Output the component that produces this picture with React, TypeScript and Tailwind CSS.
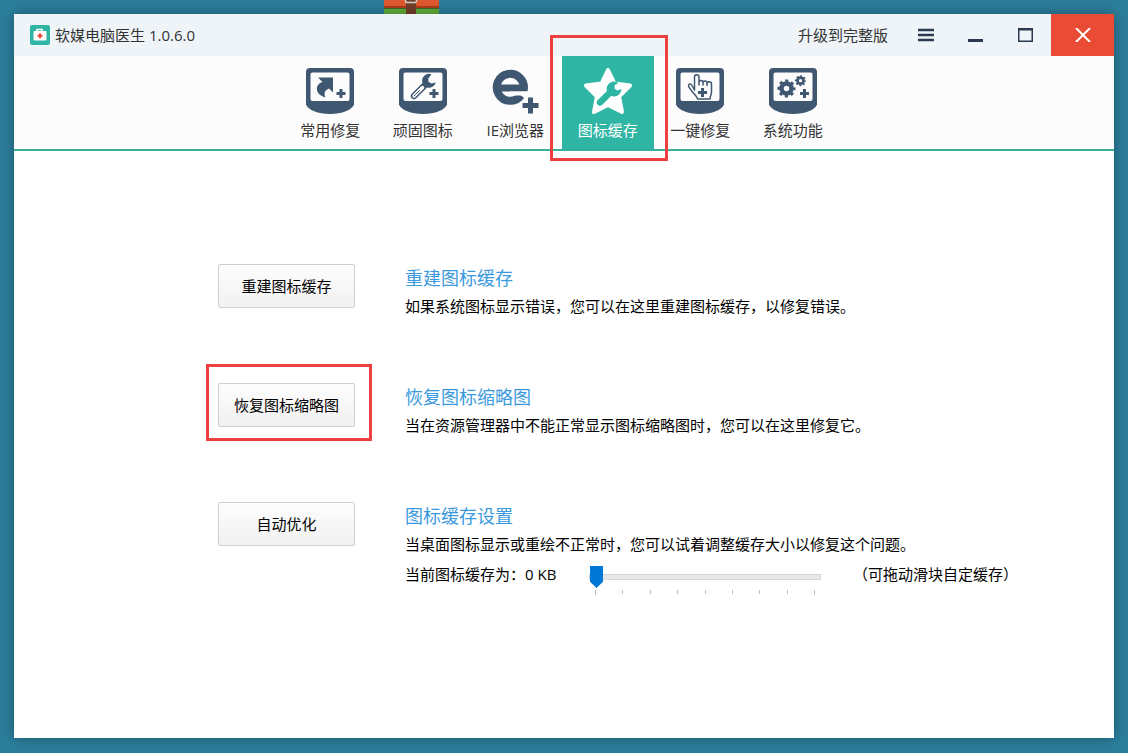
import { useState } from 'react';
import type { ReactNode } from 'react';

function Plus({ x, y, size = 9, weight = 3 }: { x: number; y: number; size?: number; weight?: number }) {
  const r = size / 2;
  return (
    <path
      d={`M${x - r} ${y}H${x + r}M${x} ${y - r}V${y + r}`}
      stroke="currentColor"
      strokeWidth={weight}
      fill="none"
    />
  );
}

function Monitor({ children }: { children: ReactNode }) {
  return (
    <svg width="48" height="46" viewBox="0 0 48 46" fill="none">
      <path
        d="M4 0h40a4 4 0 0 1 4 4v32.500C46 42 36 46 24 46S2 42 0 36.500V4a4 4 0 0 1 4-4z"
        fill="currentColor"
      />
      <rect x="4.500" y="4.500" width="39" height="28.500" rx="2" fill="#fcfcfc" />
      {children}
    </svg>
  );
}

function Gear({ x, y, r, weight }: { x: number; y: number; r: number; weight: number }) {
  const tooth = (2 * Math.PI * (r + weight / 2)) / 16;
  return (
    <g stroke="currentColor" fill="none">
      <circle cx={x} cy={y} r={r} strokeWidth={weight} />
      <circle
        cx={x}
        cy={y}
        r={r + weight / 2}
        strokeWidth={weight * 0.8}
        strokeDasharray={`${tooth} ${tooth}`}
        strokeDashoffset={tooth / 2}
      />
    </g>
  );
}

const ShortcutIcon = () => (
  <Monitor>
    <path
      d="M12 9.500H27V24.500L23 20.500C19 22 17.500 25 19.500 29.500C13.500 28 10 23.500 11 19C12 16 14.500 14.500 16.500 14Z"
      fill="currentColor"
    />
    <Plus x={35} y={25.5} />
  </Monitor>
);

const WrenchIcon = () => (
  <Monitor>
    <path
      d="M32.500 6.200A7 7 0 1 0 36.800 14.500L32.500 15.500L29.500 13.800L29.300 10.500Z"
      fill="currentColor"
    />
    <path d="M15 28L25 18" stroke="currentColor" strokeWidth="6.500" strokeLinecap="round" />
    <path d="M15 28L23.500 19.500" stroke="#fcfcfc" strokeWidth="3.500" strokeLinecap="round" />
    <path d="M15 28L20.500 22.500" stroke="currentColor" strokeWidth="1" strokeLinecap="round" />
    <Plus x={35} y={25.5} />
  </Monitor>
);

const BrowserIcon = () => (
  <svg width="48" height="46" viewBox="0 0 48 46" fill="none">
    <path
      d="M32.500 22A13.500 13.500 0 1 0 30 27.500"
      stroke="currentColor"
      strokeWidth="8"
    />
    <path d="M8 20H36.500" stroke="currentColor" strokeWidth="7" />
    <path d="M19 25.500H38" stroke="#fcfcfc" strokeWidth="4" />
    <Plus x={39.5} y={37.5} size={16} weight={5} />
  </svg>
);

const StarIcon = () => (
  <svg width="50" height="48" viewBox="0 0 50 48" fill="none">
    <path
      d="M25 3L31.500 16.500L47 18.500L36 29.500L39 45L25 38L11 45L14 29.500L3 18.500L18.500 16.500Z"
      fill="currentColor"
      stroke="currentColor"
      strokeWidth="4"
      strokeLinejoin="round"
    />
    <path
      d="M35.500 16A7.500 7.500 0 1 0 38.500 22L34.500 23.500L31.500 21.500L31.800 18Z"
      fill="#2fb5a3"
    />
    <path d="M17 35.500L28.500 24" stroke="#2fb5a3" strokeWidth="6.500" strokeLinecap="round" />
  </svg>
);

const HandIcon = () => (
  <Monitor>
    <path
      d="M18.500 22V9a2 2 0 0 1 4.500 0v8v-2.500a2 2 0 0 1 4 0V17v-2a2 2 0 0 1 4 0v2.500v-1.500a2 2 0 0 1 4.500 0V24c0 3-1.500 4-1.500 7H21.500c0-3-6.500-7-9-13c0-2.500 2.500-2.500 3.500-.500z"
      stroke="currentColor"
      strokeWidth="1.500"
      strokeLinejoin="round"
    />
    <Plus x={26.5} y={24.5} />
  </Monitor>
);

const GearsIcon = () => (
  <Monitor>
    <Gear x={17.5} y={20.5} r={5} weight={4.5} />
    <Gear x={31.5} y={12.7} r={3} weight={2.8} />
    <Plus x={35.5} y={25.5} />
  </Monitor>
);

const LogoIcon = () => (
  <svg width="20" height="20" viewBox="0 0 20 20" fill="none">
    <rect width="20" height="20" rx="2" fill="#2fb5a3" />
    <path d="M7 6V4.500h5V6" stroke="#fff" strokeWidth="1.500" />
    <rect x="3.500" y="6" width="13" height="9.500" rx="1" fill="#fff" />
    <path d="M7.500 10.800h5M10 8.300v5" stroke="#e84a34" strokeWidth="2" />
  </svg>
);

// bottom edge of the archive icon that sits on the desktop behind the window
const ArchiveIcon = () => (
  <svg width="56" height="14" viewBox="0 0 56 14" fill="none">
    <rect width="55" height="7" rx="1" fill="#e2592f" />
    <rect y="6" width="55" height="2" fill="#b23c1c" />
    <rect y="8" width="55" height="1" fill="#3c6b2c" />
    <rect y="9" width="55" height="5" fill="#62b23c" />
    <rect x="22" width="10" height="14" fill="#74402c" />
    <path d="M21.500 0v1a1.500 1.500 0 0 0 1.500 1.500h8a1.500 1.500 0 0 0 1.500-1.500V0" stroke="#d8d4cf" strokeWidth="1.500" />
  </svg>
);

const tabs = [
  { id: 'common', label: '常用修复', icon: <ShortcutIcon /> },
  { id: 'stubborn', label: '顽固图标', icon: <WrenchIcon /> },
  { id: 'ie', label: 'IE浏览器', icon: <BrowserIcon /> },
  { id: 'cache', label: '图标缓存', icon: <StarIcon />, marked: true },
  { id: 'oneclick', label: '一键修复', icon: <HandIcon /> },
  { id: 'system', label: '系统功能', icon: <GearsIcon /> },
];

const actions = [
  {
    button: '重建图标缓存',
    title: '重建图标缓存',
    text: '如果系统图标显示错误，您可以在这里重建图标缓存，以修复错误。',
  },
  {
    button: '恢复图标缩略图',
    title: '恢复图标缩略图',
    text: '当在资源管理器中不能正常显示图标缩略图时，您可以在这里修复它。',
    marked: true,
  },
  {
    button: '自动优化',
    title: '图标缓存设置',
    text: '当桌面图标显示或重绘不正常时，您可以试着调整缓存大小以修复这个问题。',
    slider: true,
  },
];

function TitleBar() {
  return (
    <header className="flex h-[42px] items-center bg-[#eff4f9] pl-4 text-[#333]">
      <LogoIcon />
      <h1 className="ml-[5px]">软媒电脑医生 1.0.6.0</h1>
      <a href="#upgrade" className="mr-[13px] ml-auto">
        升级到完整版
      </a>
      <div className="flex h-full text-[#2b3a50]">
        <button aria-label="菜单" className="flex w-[50px] items-center justify-center">
          <svg width="16" height="14" viewBox="0 0 16 14">
            <path d="M0 2h16M0 7h16M0 12h16" stroke="currentColor" strokeWidth="2.500" />
          </svg>
        </button>
        <button aria-label="最小化" className="flex w-[50px] items-center justify-center">
          <svg width="16" height="14" viewBox="0 0 16 14">
            <path d="M0 12.500h15" stroke="currentColor" strokeWidth="3" />
          </svg>
        </button>
        <button aria-label="最大化" className="flex w-[50px] items-center justify-center">
          <svg width="16" height="14" viewBox="0 0 16 14" fill="none">
            <path d="M.75 1v12.250h13.500V1" stroke="currentColor" strokeWidth="1.500" />
            <path d="M0 1.250h15" stroke="currentColor" strokeWidth="2.500" />
          </svg>
        </button>
        <button
          aria-label="关闭"
          className="flex w-[63px] items-center justify-center bg-[#e94b35] text-white"
        >
          <svg width="16" height="14" viewBox="0 0 16 14">
            <path d="M1 0l14 14M15 0L1 14" stroke="currentColor" strokeWidth="2" />
          </svg>
        </button>
      </div>
    </header>
  );
}

function CacheSlider() {
  const [size, setSize] = useState(0);

  return (
    <div className="flex h-[34px] items-start">
      <label htmlFor="cache-size" className="w-[184px] leading-8">
        当前图标缓存为：{size} KB
      </label>
      <div className="mt-2 w-[232px]">
        <input
          id="cache-size"
          type="range"
          min={0}
          max={8192}
          step={1024}
          value={size}
          onChange={(e) => setSize(Number(e.target.value))}
          className="block h-[22px] w-full appearance-none bg-transparent [&::-webkit-slider-runnable-track]:h-[6px] [&::-webkit-slider-runnable-track]:border [&::-webkit-slider-runnable-track]:border-[#d6d6d6] [&::-webkit-slider-runnable-track]:bg-[#e7e7e7] [&::-webkit-slider-thumb]:-mt-[9px] [&::-webkit-slider-thumb]:h-[22px] [&::-webkit-slider-thumb]:w-[13px] [&::-webkit-slider-thumb]:appearance-none [&::-webkit-slider-thumb]:bg-[#0078d7] [&::-webkit-slider-thumb]:[clip-path:polygon(0_0,100%_0,100%_72%,50%_100%,0_72%)]"
        />
        <div className="mt-0.5 flex justify-between px-[6px]">
          {Array.from({ length: 9 }, (_, i) => (
            <span key={i} className="h-1 w-px bg-[#bdbdbd] first:h-[5px] last:h-[5px]" />
          ))}
        </div>
      </div>
      <span className="ml-8 leading-8">（可拖动滑块自定缓存）</span>
    </div>
  );
}

export default function App() {
  const [active, setActive] = useState('cache');

  return (
    <div
      lang="zh-CN"
      className="relative flex min-h-screen bg-[#2c7f9c] px-[14px] pt-[14px] pb-[15px] font-['Open_Sans','Noto_Sans_CJK_SC',sans-serif] text-[15px]"
    >
      <div className="absolute top-0 left-[384px]">
        <ArchiveIcon />
      </div>

      <div className="relative flex flex-1 flex-col bg-white shadow-[0_0_14px_rgba(0,0,0,0.35)]">
        <TitleBar />

        <nav className="flex h-[95px] justify-center border-b-2 border-[#38b09d] bg-[#fcfcfc] pr-[5px]">
          <div className="grid w-[555px] grid-cols-6">
            {tabs.map((tab) => (
              <div key={tab.id} className="relative">
                <button
                  onClick={() => setActive(tab.id)}
                  className={`flex h-full w-full flex-col items-center whitespace-nowrap ${
                    active === tab.id ? 'bg-[#2fb5a3] text-white' : 'text-[#3f5770]'
                  }`}
                >
                  <span className="flex h-[63px] items-center pt-[7px]">{tab.icon}</span>
                  <span className={active === tab.id ? 'text-white' : 'text-[#333]'}>{tab.label}</span>
                </button>
                {tab.marked && (
                  <div className="pointer-events-none absolute -top-[21px] -right-[14px] -bottom-[12px] -left-[12px] z-10 border-3 border-[#ee4040]" />
                )}
              </div>
            ))}
          </div>
        </nav>

        <main className="flex flex-col gap-[63px] pt-[113px] pl-[204px] text-black">
          {actions.map((action) => (
            <section key={action.title} className="flex items-start gap-[50px]">
              <div className="relative shrink-0">
                <button className="h-11 w-[137px] rounded-xs border border-[#cfcfcf] bg-gradient-to-b from-[#fdfdfd] to-[#f1f1f1]">
                  {action.button}
                </button>
                {action.marked && (
                  <div className="pointer-events-none absolute -top-[19px] -right-[17px] -bottom-[14px] -left-[12px] border-3 border-[#ee4040]" />
                )}
              </div>
              <div>
                <h2 className="text-lg leading-7 text-[#3b9ade]">{action.title}</h2>
                <p className="leading-7">{action.text}</p>
                {action.slider && <CacheSlider />}
              </div>
            </section>
          ))}
        </main>
      </div>
    </div>
  );
}
